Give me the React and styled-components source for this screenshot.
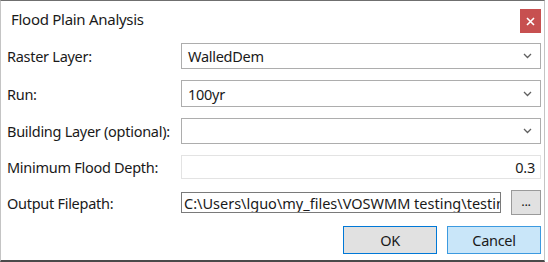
import React from "react";
import styled, { createGlobalStyle } from "styled-components";

const GlobalStyle = createGlobalStyle`
  html, body {
    margin: 0;
    padding: 0;
    background: #ffffff;
  }
  * {
    box-sizing: border-box;
  }
`;

const font = `"Noto Sans", "Open Sans", "Liberation Sans", sans-serif`;

const Window = styled.div`
  width: 545px;
  height: 262px;
  background: #ffffff;
  border-top: 1px solid #6f6f6f;
  border-left: 1px solid #c4c4c4;
  border-right: 1px solid #c4c4c4;
  border-bottom: 2px solid #4a4a4a;
  display: flex;
  flex-direction: column;
  font-family: ${font};
  letter-spacing: -0.28px;
  color: #1a1a1a;
`;

const TitleBar = styled.div`
  height: 42px;
  display: flex;
  align-items: flex-start;
  justify-content: space-between;
  padding: 0 3px 0 10px;
`;

const Title = styled.div`
  font-size: 15px;
  line-height: 15px;
  margin-top: 11px;
`;

const CloseButton = styled.div`
  width: 21px;
  height: 24px;
  margin-top: 8px;
  background: #c75050;
  display: flex;
  align-items: center;
  justify-content: center;
`;

const Body = styled.div`
  display: flex;
  flex-direction: column;
  gap: 11px;
  padding: 0 3px 0 6px;
`;

const Row = styled.div`
  display: grid;
  grid-template-columns: 174px 1fr;
  align-items: center;
  height: ${({ $h }) => $h}px;
`;

const Label = styled.div`
  font-size: 14.5px;
  white-space: nowrap;
`;

const Combo = styled.div`
  height: 100%;
  border: 1px solid #adadad;
  background: #ffffff;
  display: flex;
  align-items: center;
  justify-content: space-between;
  padding: 0 8px 0 6px;
  font-size: 14.5px;
`;

const NumberBox = styled.div`
  height: 100%;
  border: 1px solid #e3e3e3;
  display: flex;
  align-items: center;
  justify-content: flex-end;
  padding: 0 5px;
  font-size: 14.5px;
`;

const PathRow = styled.div`
  display: flex;
  align-items: center;
  gap: 10px;
  height: 100%;
  min-width: 0;
`;

const PathBox = styled.div`
  flex: 1;
  min-width: 0;
  height: 21px;
  border: 1px solid #7a7a7a;
  display: flex;
  align-items: center;
  padding: 0 2px;
  font-size: 14.5px;
  letter-spacing: 0;
  white-space: nowrap;
  overflow: hidden;
`;

const BrowseButton = styled.div`
  flex: none;
  width: 30px;
  height: 25px;
  border: 1px solid #9a9a9a;
  background: #e1e1e1;
  display: flex;
  align-items: center;
  justify-content: center;
  font-size: 13px;
  padding-bottom: 3px;
`;

const Footer = styled.div`
  display: flex;
  justify-content: flex-end;
  gap: 10px;
  height: 28px;
`;

const Button = styled.div`
  width: 94px;
  height: 28px;
  border: 1px solid ${({ $hover }) => ($hover ? "#3c9ae0" : "#0078d7")};
  background: ${({ $hover }) => ($hover ? "#c9e6f9" : "#e1e1e1")};
  display: flex;
  align-items: center;
  justify-content: center;
  font-size: 14.5px;
`;

const Chevron = () => (
  <svg width="9" height="6" viewBox="0 0 9 6">
    <path d="M1 1 L4.5 4.5 L8 1" fill="none" stroke="#606060" strokeWidth="1.3" />
  </svg>
);

const CloseX = () => (
  <svg width="9" height="9" viewBox="0 0 9 9">
    <path d="M1 1 L8 8 M8 1 L1 8" stroke="#ffffff" strokeWidth="1.6" />
  </svg>
);

export default function App() {
  return (
    <>
      <GlobalStyle />
      <Window>
        <TitleBar>
          <Title>Flood Plain Analysis</Title>
          <CloseButton>
            <CloseX />
          </CloseButton>
        </TitleBar>
        <Body>
          <Row $h={26}>
            <Label>Raster Layer:</Label>
            <Combo>
              <span>WalledDem</span>
              <Chevron />
            </Combo>
          </Row>
          <Row $h={27}>
            <Label>Run:</Label>
            <Combo>
              <span>100yr</span>
              <Chevron />
            </Combo>
          </Row>
          <Row $h={26}>
            <Label>Building Layer (optional):</Label>
            <Combo>
              <span></span>
              <Chevron />
            </Combo>
          </Row>
          <Row $h={24}>
            <Label>Minimum Flood Depth:</Label>
            <NumberBox>0.3</NumberBox>
          </Row>
          <Row $h={25}>
            <Label>Output Filepath:</Label>
            <PathRow>
              <PathBox>C:\Users\lguo\my_files\VOSWMM testing\testing</PathBox>
              <BrowseButton>...</BrowseButton>
            </PathRow>
          </Row>
          <Footer>
            <Button>OK</Button>
            <Button $hover>Cancel</Button>
          </Footer>
        </Body>
      </Window>
    </>
  );
}
